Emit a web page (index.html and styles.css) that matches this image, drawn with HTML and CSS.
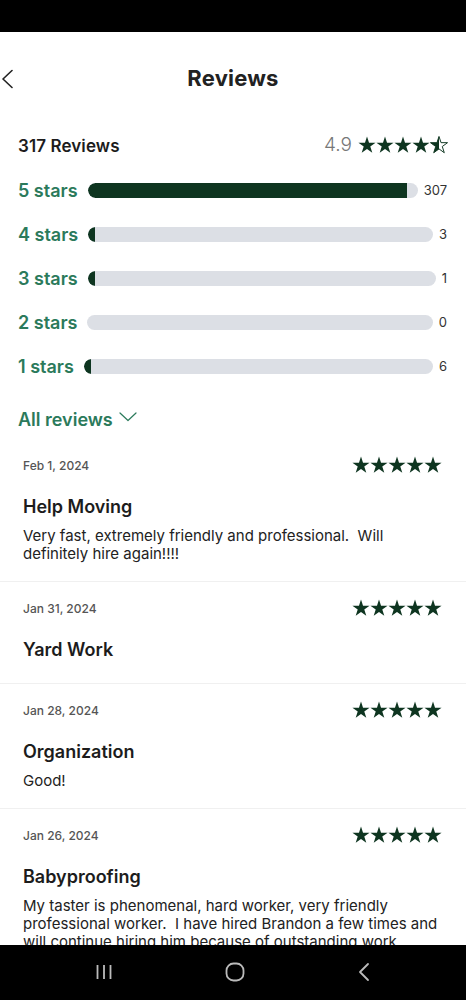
FILE: index.html
```html
<!DOCTYPE html>
<html lang="en">
<head>
<meta charset="utf-8">
<title>Reviews</title>
<link rel="stylesheet" href="styles.css">
</head>
<body>
<svg class="defs" width="0" height="0" aria-hidden="true">
  <defs>
    <symbol id="star" viewBox="0 0 24 24">
      <path d="M12 0.6 L14.7 8.88 L23.41 8.89 L16.37 14.02 L19.05 22.31 L12 17.2 L4.95 22.31 L7.63 14.02 L0.59 8.89 L9.3 8.88 Z"/>
    </symbol>
    <clipPath id="lefthalf"><rect x="0" y="0" width="12" height="24"/></clipPath>
  </defs>
</svg>
<div class="phone">
  <div class="statusbar"></div>
  <div class="screen">
    <header class="header">
      <button class="back" aria-label="Back">
        <svg width="12" height="20" viewBox="0 0 12 20"><path d="M11 1.5 L2 10 L11 18.5" fill="none" stroke="#222" stroke-width="1.6" stroke-linecap="round" stroke-linejoin="round"/></svg>
      </button>
      <h1 class="title">Reviews</h1>
      <span></span>
    </header>

    <section class="summary">
      <div class="summary-head">
        <span class="total">317 Reviews</span>
        <div class="avg">
          <span class="avg-num">4.9</span>
          <span class="stars big">
            <svg viewBox="0 0 24 24"><use href="#star"/></svg>
            <svg viewBox="0 0 24 24"><use href="#star"/></svg>
            <svg viewBox="0 0 24 24"><use href="#star"/></svg>
            <svg viewBox="0 0 24 24"><use href="#star"/></svg>
            <svg viewBox="0 0 24 24" class="half"><use href="#star" clip-path="url(#lefthalf)"/><use href="#star" class="outline"/></svg>
          </span>
        </div>
      </div>

      <div class="dist-row">
        <span class="dist-label">5 stars</span>
        <div class="track"><div class="fill" style="width:96.8%"></div></div>
        <span class="dist-count">307</span>
      </div>
      <div class="dist-row">
        <span class="dist-label">4 stars</span>
        <div class="track"><div class="fill" style="width:0.9%"></div></div>
        <span class="dist-count">3</span>
      </div>
      <div class="dist-row">
        <span class="dist-label">3 stars</span>
        <div class="track"><div class="fill" style="width:0.3%"></div></div>
        <span class="dist-count">1</span>
      </div>
      <div class="dist-row">
        <span class="dist-label">2 stars</span>
        <div class="track"></div>
        <span class="dist-count">0</span>
      </div>
      <div class="dist-row">
        <span class="dist-label">1 stars</span>
        <div class="track"><div class="fill" style="width:1.9%"></div></div>
        <span class="dist-count">6</span>
      </div>

      <div class="filter">
        <span>All reviews</span>
        <svg width="18" height="10" viewBox="0 0 18 10"><path d="M1 1 L9 8.5 L17 1" fill="none" stroke="#2b7a5b" stroke-width="1.2" stroke-linecap="round" stroke-linejoin="round"/></svg>
      </div>
    </section>

    <section class="reviews">
      <article class="review">
        <div class="review-top">
          <span class="date">Feb 1, 2024</span>
          <span class="stars small">
            <svg viewBox="0 0 24 24"><use href="#star"/></svg>
            <svg viewBox="0 0 24 24"><use href="#star"/></svg>
            <svg viewBox="0 0 24 24"><use href="#star"/></svg>
            <svg viewBox="0 0 24 24"><use href="#star"/></svg>
            <svg viewBox="0 0 24 24"><use href="#star"/></svg>
          </span>
        </div>
        <h2 class="review-title">Help Moving</h2>
        <p class="review-body">Very fast, extremely friendly and professional.&nbsp; Will definitely hire again!!!!</p>
      </article>

      <article class="review no-body">
        <div class="review-top">
          <span class="date">Jan 31, 2024</span>
          <span class="stars small">
            <svg viewBox="0 0 24 24"><use href="#star"/></svg>
            <svg viewBox="0 0 24 24"><use href="#star"/></svg>
            <svg viewBox="0 0 24 24"><use href="#star"/></svg>
            <svg viewBox="0 0 24 24"><use href="#star"/></svg>
            <svg viewBox="0 0 24 24"><use href="#star"/></svg>
          </span>
        </div>
        <h2 class="review-title">Yard Work</h2>
      </article>

      <article class="review">
        <div class="review-top">
          <span class="date">Jan 28, 2024</span>
          <span class="stars small">
            <svg viewBox="0 0 24 24"><use href="#star"/></svg>
            <svg viewBox="0 0 24 24"><use href="#star"/></svg>
            <svg viewBox="0 0 24 24"><use href="#star"/></svg>
            <svg viewBox="0 0 24 24"><use href="#star"/></svg>
            <svg viewBox="0 0 24 24"><use href="#star"/></svg>
          </span>
        </div>
        <h2 class="review-title">Organization</h2>
        <p class="review-body">Good!</p>
      </article>

      <article class="review">
        <div class="review-top">
          <span class="date">Jan 26, 2024</span>
          <span class="stars small">
            <svg viewBox="0 0 24 24"><use href="#star"/></svg>
            <svg viewBox="0 0 24 24"><use href="#star"/></svg>
            <svg viewBox="0 0 24 24"><use href="#star"/></svg>
            <svg viewBox="0 0 24 24"><use href="#star"/></svg>
            <svg viewBox="0 0 24 24"><use href="#star"/></svg>
          </span>
        </div>
        <h2 class="review-title">Babyproofing</h2>
        <p class="review-body">My taster is phenomenal, hard worker, very friendly professional worker.&nbsp; I have hired Brandon a few times and will continue hiring him because of outstanding work.</p>
      </article>
    </section>
  </div>
  <nav class="navbar">
    <svg width="16" height="16" viewBox="0 0 16 16"><path d="M1.5 1 V15 M8 1 V15 M14.5 1 V15" stroke="#bbb" stroke-width="1.8"/></svg>
    <svg width="20" height="20" viewBox="0 0 20 20"><rect x="1.5" y="1.5" width="17" height="17" rx="7" fill="none" stroke="#bbb" stroke-width="1.8"/></svg>
    <svg width="12" height="20" viewBox="0 0 12 20"><path d="M10 2 L2 10 L10 18" fill="none" stroke="#bbb" stroke-width="1.8" stroke-linecap="round" stroke-linejoin="round"/></svg>
  </nav>
</div>
</body>
</html>
```

FILE: styles.css
```css
* { box-sizing: border-box; }

html, body {
  margin: 0;
  padding: 0;
  background: #000;
}

body {
  font-family: Inter, "Noto Sans", "Liberation Sans", sans-serif;
  color: #222;
}

.defs { position: absolute; width: 0; height: 0; }

.phone {
  width: 466px;
  height: 1000px;
  display: flex;
  flex-direction: column;
  background: #fff;
  overflow: hidden;
}

.statusbar {
  height: 32px;
  flex: none;
  background: #000;
}

.screen {
  flex: 1;
  overflow: hidden;
  background: #fff;
}

.header {
  height: 92px;
  display: grid;
  grid-template-columns: 1fr auto 1fr;
  align-items: center;
}

.back {
  justify-self: start;
  border: 0;
  background: none;
  padding: 0 0 0 1px;
  display: flex;
  align-items: center;
  margin-top: 2px;
}

.title {
  margin: 0;
  font-size: 22px;
  font-weight: 700;
  color: #222;
  letter-spacing: 0.2px;
}

.summary {
  padding: 0 19px 0 18px;
}

.summary-head {
  height: 44px;
  display: flex;
  align-items: center;
  justify-content: space-between;
}

.total {
  font-size: 17px;
  font-weight: 600;
  color: #1c1c1c;
  letter-spacing: 0.1px;
}

.avg {
  display: flex;
  align-items: center;
  gap: 6px;
  margin-top: -3px;
}

.avg-num {
  font-size: 19px;
  font-weight: 300;
  color: #777;
}

.stars {
  display: flex;
  fill: #0e3520;
}

.stars svg { display: block; }

.stars.big svg { width: 18px; height: 18px; }
.stars.big { margin-right: -1px; }

.stars.small svg { width: 18px; height: 18px; }
.stars.small { margin-right: -1px; }

.half .outline {
  fill: none;
  stroke: #0e3520;
  stroke-width: 1.3;
}

.dist-row {
  height: 44px;
  display: flex;
  align-items: center;
}

.dist-label {
  font-size: 18px;
  font-weight: 600;
  color: #2b7a5b;
  margin-right: 10px;
  white-space: nowrap;
}

.track {
  flex: 1;
  height: 15px;
  border-radius: 8px;
  background: #dcdfe5;
  overflow: hidden;
}

.fill {
  height: 100%;
  min-width: 7px;
  background: #0e3520;
  border-radius: 8px 0 0 8px;
}

.dist-count {
  margin-left: 6px;
  font-size: 13px;
  color: #333;
}

.filter {
  margin-top: 11px;
  height: 40px;
  display: flex;
  align-items: center;
  gap: 6px;
  font-size: 18px;
  font-weight: 600;
  color: #2b7a5b;
}

.filter svg { margin-top: -5px; }

.review {
  padding: 17px 25px 18px 23px;
  border-bottom: 1px solid #f0f0f0;
}

.review.no-body { padding-bottom: 21px; }

.review-top {
  height: 18px;
  display: flex;
  align-items: center;
  justify-content: space-between;
}

.date {
  font-size: 12px;
  font-weight: 500;
  color: #555;
}

.review-title {
  margin: 21px 0 0;
  font-size: 18px;
  line-height: 24px;
  font-weight: 600;
  color: #1c1c1c;
}

.review-body {
  margin: 8px 0 0;
  font-size: 15px;
  line-height: 18px;
  color: #222;
}

.navbar {
  height: 55px;
  flex: none;
  background: #000;
  display: flex;
  align-items: center;
  justify-content: space-between;
  padding: 0 96px 2px 96px;
}
```
